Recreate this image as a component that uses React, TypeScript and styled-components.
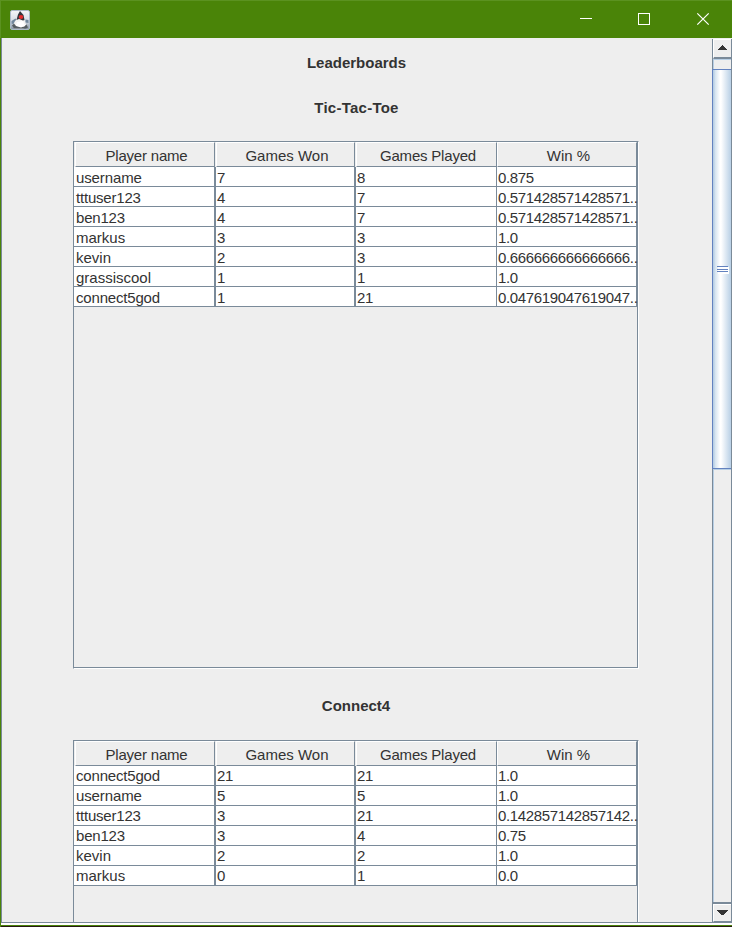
import React from "react";
import styled, { createGlobalStyle } from "styled-components";

const line = "#7a8a99";
const panel = "#eeeeee";

const GlobalStyle = createGlobalStyle`
  * { box-sizing: border-box; }
  html, body { margin: 0; height: 100%; overflow: hidden; }
  #root { height: 100%; }
`;

const Window = styled.div`
  width: 732px;
  height: 927px;
  display: flex;
  flex-direction: column;
  overflow: hidden;
  background: ${panel};
  color: #333333;
  font: 15px/19px "Liberation Sans", Arial, sans-serif;
`;

const TitleBar = styled.header`
  height: 38px;
  flex: none;
  display: flex;
  align-items: center;
  justify-content: space-between;
  padding-left: 10px;
  background: #4a8408;
  border-top: 1px solid #5b9220;
  border-left: 1px solid #5b9220;
`;

const AppIcon = styled.svg`
  width: 20px;
  height: 20px;
  margin-left: -1px;
`;

const Controls = styled.svg`
  width: 172px;
  height: 37px;
  flex: none;
`;

const Body = styled.div`
  flex: 1;
  min-height: 0;
  display: flex;
  border-left: 1px solid #4a8408;
`;

const Viewport = styled.main`
  width: 711px;
  flex: none;
  display: flex;
  flex-direction: column;
  padding: 0 75px 0 71px;
  border-left: 1px solid ${line};
  overflow: hidden;
`;

const Heading = styled.h1<{ $height: number; $lead: number; $indent: number; $spacing?: number }>`
  height: ${(p) => p.$height}px;
  flex: none;
  margin: 0;
  padding-top: ${(p) => p.$lead}px;
  padding-left: ${(p) => p.$indent}px;
  letter-spacing: ${(p) => p.$spacing ?? 0}px;
  text-align: center;
  font-size: 15px;
  line-height: 18px;
  font-weight: bold;
`;

const TableFrame = styled.section`
  width: 566px;
  height: 528px;
  flex: none;
  display: flex;
  flex-direction: column;
  border-top: 1px solid ${line};
  border-left: 1px solid ${line};
  border-right: 1px solid #fff;
  border-bottom: 1px solid #fff;
`;

const TableInner = styled.div`
  flex: 1;
  border-right: 1px solid ${line};
  border-bottom: 1px solid ${line};
`;

const columns = "141px 140px 142px 140px";

const HeaderRow = styled.div`
  display: grid;
  grid-template-columns: ${columns};
  grid-template-rows: 25px;
  height: 25px;
`;

const HeaderCell = styled.div<{ $inset: number; $spacing: number }>`
  height: 25px;
  margin-left: ${(p) => p.$inset}px;
  padding-left: 3px;
  border: 1px solid ${line};
  border-top-color: #fff;
  border-left-color: #fff;
  letter-spacing: ${(p) => p.$spacing}px;
  text-align: center;
  line-height: 26px;
  white-space: nowrap;
`;

const Row = styled.div`
  display: grid;
  grid-template-columns: ${columns};
  grid-template-rows: 19px;
  height: 20px;
  background: #fff;
  border-bottom: 1px solid ${line};
`;

const Cell = styled.div<{ $rule: boolean; $pad: number; $spacing: number; $leading: number }>`
  padding-left: ${(p) => p.$pad}px;
  border-right: 1px solid ${line};
  border-left: ${(p) => (p.$rule ? `1px solid ${line}` : "0")};
  letter-spacing: ${(p) => p.$spacing}px;
  line-height: ${(p) => p.$leading}px;
  white-space: nowrap;
`;

const ScrollBar = styled.aside`
  width: 20px;
  flex: none;
  display: flex;
  flex-direction: column;
  border-left: 1px solid ${line};
  border-right: 1px solid ${line};
  margin-top: 1px;
`;

const ArrowButton = styled.div<{ $down?: boolean }>`
  height: ${(p) => (p.$down ? 18 : 20)}px;
  flex: none;
  display: flex;
  justify-content: center;
  padding-top: ${(p) => (p.$down ? 5 : 5)}px;
  padding-right: ${(p) => (p.$down ? 1 : 1)}px;
  border-top: 1px solid #fff;
  border-left: 1px solid #fff;
  border-bottom: ${(p) => (p.$down ? 1 : 2)}px solid ${line};
  box-shadow: ${(p) => (p.$down ? `0 -2px 0 ${line}` : "none")};
`;

const Track = styled.div<{ $height: number }>`
  height: ${(p) => p.$height}px;
  flex: none;
  border-top: 1px solid #b8cfe5;
  border-left: 1px solid #b8cfe5;
`;

const Thumb = styled.div`
  height: 400px;
  flex: none;
  margin-left: -1px;
  padding: 2px 0 0 2px;
  display: flex;
  align-items: center;
  justify-content: center;
  border: solid #6382bf;
  border-width: 1px 0 1px 1px;
  background: linear-gradient(90deg, #b8cfe5 0 1px, #d3e2ef 2px, #ffffff 7px, #ffffff 8px, #b8cfe5 18px);
`;

const Footer = styled.footer`
  height: 5px;
  flex: none;
  border-left: 1px solid #4a8408;
  background: linear-gradient(180deg, ${line} 0 1px, #fff 1px 3px, #4a8408 3px 4px, #271914 4px 5px);
`;

type Record4 = [string, string, string, string];

const titles = [
  { text: "Player name", spacing: -0.2 },
  { text: "Games Won", spacing: 0 },
  { text: "Games Played", spacing: -0.2 },
  { text: "Win %", spacing: 0 },
];

const nameSpacing: Record<string, number> = {
  username: -0.12,
  tttuser123: -0.2,
  ben123: -0.2,
  connect5god: -0.18,
};

const ticTacToe: Record4[] = [
  ["username", "7", "8", "0.875"],
  ["tttuser123", "4", "7", "0.571428571428571.."],
  ["ben123", "4", "7", "0.571428571428571.."],
  ["markus", "3", "3", "1.0"],
  ["kevin", "2", "3", "0.666666666666666.."],
  ["grassiscool", "1", "1", "1.0"],
  ["connect5god", "1", "21", "0.047619047619047.."],
];

const connect4: Record4[] = [
  ["connect5god", "21", "21", "1.0"],
  ["username", "5", "5", "1.0"],
  ["tttuser123", "3", "21", "0.142857142857142.."],
  ["ben123", "3", "4", "0.75"],
  ["kevin", "2", "2", "1.0"],
  ["markus", "0", "1", "0.0"],
];

function ScoreTable({ rows, leading }: { rows: Record4[]; leading: number }) {
  return (
    <TableFrame>
      <TableInner>
        <HeaderRow>
          {titles.map((t, i) => (
            <HeaderCell key={t.text} $inset={i === 3 ? 0 : 1} $spacing={t.spacing}>
              {t.text}
            </HeaderCell>
          ))}
        </HeaderRow>
        {rows.map((r) => (
          <Row key={r[0]}>
            {r.map((v, i) => (
              <Cell
                key={i}
                $rule={i === 1 || i === 2}
                $pad={i === 0 ? 2 : 1}
                $spacing={i === 0 ? nameSpacing[v] ?? 0 : -0.34}
                $leading={leading}
              >
                {v}
              </Cell>
            ))}
          </Row>
        ))}
      </TableInner>
    </TableFrame>
  );
}

export default function App() {
  return (
    <Window>
      <GlobalStyle />
      <TitleBar>
        <AppIcon viewBox="0 0 20 20">
          <defs>
            <linearGradient id="tile" x1="0" y1="0" x2="0" y2="1">
              <stop offset="0" stopColor="#f4f6f8" />
              <stop offset=".55" stopColor="#d5dce4" />
              <stop offset="1" stopColor="#83939f" />
            </linearGradient>
          </defs>
          <rect x=".5" y=".5" width="19" height="19" rx="1.5" fill="url(#tile)" stroke="#aab8c6" />
          <path d="M1.500 11l4-2.500 2 3-3 3-3-1zM15.500 9.500l3 .5v3l-3-.5z" fill="#71879b" />
          <path d="M5 11l4-3.500 5 1.500 3 8-4 1.500H4L3 15z" fill="#f3f3f2" />
          <path d="M10 1L8 4.500 6.500 10 9 9l4 1.500 1.500-.5L13.500 5z" fill="#33343b" />
          <ellipse cx="11" cy="7" rx="2.300" ry="2.100" fill="#e52c2c" />
          <path d="M2 15.500l2-2 2 2.500 8 .5 2.500-2 1.500 3-2 1H4z" fill="#555c60" />
          <path d="M7 12l6-1 2 5-4 1.500L6 16z" fill="#fff" />
        </AppIcon>
        <Controls viewBox="0 0 172 37" fill="none" stroke="#fff">
          <path d="M20 17.500h12M78.500 12.500h11v11h-11z" shapeRendering="crispEdges" />
          <path d="M137.300 12.300l11.400 11.400m0-11.400l-11.400 11.400" strokeWidth="1.2" />
        </Controls>
      </TitleBar>
      <Body>
        <Viewport>
          <Heading $height={45} $lead={16} $indent={3}>Leaderboards</Heading>
          <Heading $height={58} $lead={16} $indent={3} $spacing={0.25}>Tic-Tac-Toe</Heading>
          <ScoreTable rows={ticTacToe} leading={21} />
          <Heading $height={71} $lead={28} $indent={2}>Connect4</Heading>
          <ScoreTable rows={connect4} leading={19} />
        </Viewport>
        <ScrollBar>
          <ArrowButton>
            <svg width="9" height="5" shapeRendering="crispEdges" fill="#333">
              <path d="M4 0h1v1h1v1h1v1h1v1h1v1H0V4h1V3h1V2h1V1h1z" />
            </svg>
          </ArrowButton>
          <Track $height={10} />
          <Thumb>
            <svg width="12" height="8" shapeRendering="crispEdges">
              <path d="M1 1h11v7H1z" fill="#fff" />
              <path d="M0 .5h11M0 3.500h11M0 5.500h11" stroke="#6382bf" />
            </svg>
          </Thumb>
          <Track $height={435} />
          <ArrowButton $down>
            <svg width="11" height="5" shapeRendering="crispEdges" fill="#333">
              <path d="M0 0h11v1h-1v1H9v1H8v1H7v1H4V4H3V3H2V2H1V1H0z" />
            </svg>
          </ArrowButton>
        </ScrollBar>
      </Body>
      <Footer />
    </Window>
  );
}
